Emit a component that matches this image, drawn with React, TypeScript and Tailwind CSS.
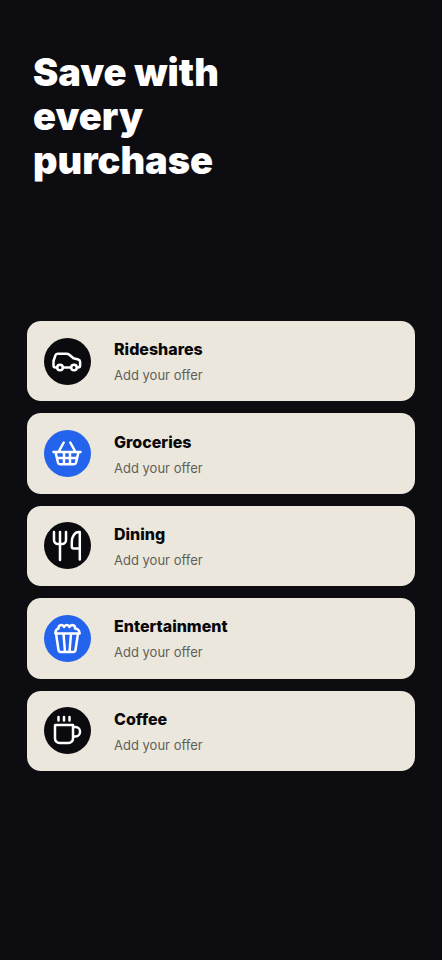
import type { ReactNode } from "react";

type Offer = { name: string; circle: string; icon: ReactNode };

const offers: Offer[] = [
  {
    name: "Rideshares",
    circle: "bg-[#0b0b0f]",
    icon: (
      <>
        <path d="M14 30h-1.500a2 2 0 0 1-2-2v-4.500l2-5.800a2.200 2.200 0 0 1 2-1.500h9.200c1 0 1.600.2 2.300.8l4.500 3.800 4.800 1.200a2.400 2.400 0 0 1 1.800 2.300V28a2 2 0 0 1-2 2H34M20.200 30h7.600" />
        <circle cx="17" cy="30" r="2.8" />
        <circle cx="31" cy="30" r="2.8" />
      </>
    ),
  },
  {
    name: "Groceries",
    circle: "bg-[#2463eb]",
    icon: (
      <path d="M10.500 22.500h27M12.500 22.500l2.500 10.800a2 2 0 0 0 2 1.500h14a2 2 0 0 0 2-1.500l2.500-10.800M15.500 22.500l5.200-9.500M32.500 22.500l-5.200-9.500M14 28.500h20M21 22.500v12.300M27 22.500v12.300" />
    ),
  },
  {
    name: "Dining",
    circle: "bg-[#0b0b0f]",
    icon: (
      <path d="M11 10.500v8a4 4 0 0 0 4 4h4a4 4 0 0 0 4-4v-8M17 10.500v28M36.800 38v-27.500h-1c-4 0-7 4.500-7 10v4.500a2 2 0 0 0 2 2h6" />
    ),
  },
  {
    name: "Entertainment",
    circle: "bg-[#2463eb]",
    icon: (
      <>
        <path d="M13 19l2.500 16.500a2.200 2.200 0 0 0 2.200 2h12.600a2.200 2.200 0 0 0 2.200-2l2.500-16.500M12.500 19h24M20.500 19l1.500 18.500M28 19l-1.500 18.500" />
        <path d="M12.500 18.500c0-2.500 1-4 3-4.500-.2-4 4.300-4.500 5.500-1.500 1.200-2.700 4.500-2.700 5.500 0 1.500-3 6-2.200 5.500 1.500 3 .3 4.300 2 4.500 4.500" />
      </>
    ),
  },
  {
    name: "Coffee",
    circle: "bg-[#0b0b0f]",
    icon: (
      <path d="M12.500 18.500h17.500v13.500a4.500 4.500 0 0 1-4.500 4.500h-9a4.500 4.500 0 0 1-4.500-4.500V19a.5.5 0 0 1 .5-.5M30 20.500h2.500a4.500 4.500 0 0 1 4.500 4.500v.5a4.500 4.500 0 0 1-4.500 4.500H30M15.500 10.500v3.500M21 10.500v3.500M26.500 10.500v3.500" />
    ),
  },
];

function OfferCard({ name, circle, icon }: Offer) {
  return (
    <button
      type="button"
      className="flex w-full items-center gap-[23px] rounded-[14px] bg-[#ebe7dd] px-[17px] text-left"
    >
      <span className={`size-[47px] shrink-0 rounded-full ${circle}`}>
        <svg
          viewBox="1 0.5 47 47"
          className="size-[47px]"
          fill="none"
          stroke="#ffffff"
          strokeWidth="2.5"
          strokeLinecap="round"
          strokeLinejoin="round"
          aria-hidden="true"
        >
          {icon}
        </svg>
      </span>
      <span className="flex flex-col gap-0.5 pt-0.5">
        <span className="text-base leading-6 font-extrabold text-[#08080b]">{name}</span>
        <span className="text-[13px] leading-6 text-[#625e57]">Add your offer</span>
      </span>
    </button>
  );
}

export default function App() {
  return (
    <main className="min-h-screen bg-[#0c0c11] px-[27px] pt-[50px] pb-12 font-['Inter','Liberation_Sans',sans-serif]">
      <h1 className="px-[6px] text-[38px] leading-[44px] font-black text-white">
        Save with
        <br />
        every
        <br />
        purchase
      </h1>
      <ul className="mt-[139px] grid h-[450px] auto-rows-fr gap-3">
        {offers.map((offer) => (
          <li key={offer.name} className="flex">
            <OfferCard {...offer} />
          </li>
        ))}
      </ul>
    </main>
  );
}
